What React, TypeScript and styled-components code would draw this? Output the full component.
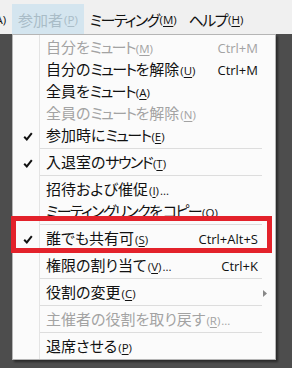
import styled, { createGlobalStyle } from 'styled-components';

const GlobalStyle = createGlobalStyle`
  html, body {
    margin: 0;
    padding: 0;
    background: #4d4d4d;
    width: 292px;
    height: 368px;
    overflow: hidden;
  }
  * {
    box-sizing: border-box;
  }
`;

const jp = `'Noto Sans CJK JP', 'Noto Sans', sans-serif`;
const latin = `'Open Sans', 'Liberation Sans', sans-serif`;

const MenuBar = styled.div`
  height: 34px;
  background: #f0f0f0;
  display: flex;
  align-items: flex-end;
  overflow: hidden;
  padding-top: 4px;
`;

const BarItem = styled.div<{ $active?: boolean; $first?: boolean }>`
  height: 30px;
  display: flex;
  align-items: center;
  padding: 0 6px;
  margin-left: ${(p) => (p.$first ? '-15px' : '0')};
  font-family: ${jp};
  font-feature-settings: 'palt';
  font-size: 15px;
  color: ${(p) => (p.$active ? '#a9bcc7' : '#111')};
  background: ${(p) => (p.$active ? '#d4e5ef' : 'transparent')};
  white-space: nowrap;
`;

const Kana = styled.span`
  letter-spacing: -1.6px;
`;

const Key = styled.span`
  font-family: ${latin};
  font-size: 11.5px;
  margin-left: 1px;

  u {
    text-decoration: underline;
    text-underline-offset: 2px;
  }
`;

const Stage = styled.div`
  padding: 0 16px 0 12px;
`;

const Menu = styled.div`
  position: relative;
  width: 264px;
  background: #fbfbfb linear-gradient(to right, transparent 26px, #e4e4e4 26px, #e4e4e4 27px, transparent 27px);
  border: 1px solid #b5b5b5;
  box-shadow: 2px 2px 2px rgba(0, 0, 0, 0.45);
  padding: 1px 0 2px;
`;

const Item = styled.div<{ $disabled?: boolean }>`
  position: relative;
  height: 22px;
  display: grid;
  grid-template-columns: 27px 1fr auto 17px;
  align-items: center;
  color: ${(p) => (p.$disabled ? '#a3a3a3' : '#111')};
`;

const CheckCell = styled.div`
  display: flex;
  align-items: center;
  justify-content: center;
  padding-left: 2px;

  svg {
    width: 10px;
    height: 9px;
  }
`;

const Label = styled.div`
  padding-left: 6px;
  font-family: ${jp};
  font-feature-settings: 'palt';
  font-size: 15px;
  white-space: nowrap;
  line-height: 22px;
`;

const Shortcut = styled.div`
  font-family: ${latin};
  font-size: 13px;
  text-align: right;
`;

const ArrowCell = styled.div`
  display: flex;
  align-items: center;
  justify-content: center;
  padding-right: 4px;

  svg {
    width: 4px;
    height: 7px;
  }
`;

const Separator = styled.div`
  height: 5px;
  display: flex;
  align-items: center;
  padding: 0 13px 0 27px;

  &::after {
    content: '';
    flex: 1;
    height: 1px;
    background: #dddddd;
  }
`;

const Highlight = styled.div`
  position: absolute;
  left: -2px;
  right: 3px;
  top: -11px;
  bottom: -4px;
  border: 5px solid #e3222b;
  pointer-events: none;
`;

type Entry =
  | 'sep'
  | {
      text: string;
      key: string;
      dots?: boolean;
      shortcut?: string;
      checked?: boolean;
      disabled?: boolean;
      submenu?: boolean;
      marked?: boolean;
    };

const entries: Entry[] = [
  { text: '自分をミュート', key: 'M', shortcut: 'Ctrl+M', disabled: true },
  { text: '自分のミュートを解除', key: 'U', shortcut: 'Ctrl+M' },
  { text: '全員をミュート', key: 'A' },
  { text: '全員のミュートを解除', key: 'N', disabled: true },
  { text: '参加時にミュート', key: 'E', checked: true },
  'sep',
  { text: '入退室のサウンド', key: 'T', checked: true },
  'sep',
  { text: '招待および催促', key: 'I', dots: true },
  { text: 'ミーティングリンクをコピー', key: 'O' },
  'sep',
  { text: '誰でも共有可', key: 'S', shortcut: 'Ctrl+Alt+S', checked: true, marked: true },
  'sep',
  { text: '権限の割り当て', key: 'V', dots: true, shortcut: 'Ctrl+K' },
  'sep',
  { text: '役割の変更', key: 'C', submenu: true },
  'sep',
  { text: '主催者の役割を取り戻す', key: 'R', dots: true, disabled: true },
  'sep',
  { text: '退席させる', key: 'P' },
];

// katakana in the UI font runs narrower than in Noto, so tighten those runs
function JpText({ text }: { text: string }) {
  const runs = text.match(/[\u30A0-\u30FF]+|[^\u30A0-\u30FF]+/g) ?? [];
  return (
    <>
      {runs.map((r, i) => (/[\u30A0-\u30FF]/.test(r) ? <Kana key={i}>{r}</Kana> : <span key={i}>{r}</span>))}
    </>
  );
}

function Check() {
  return (
    <svg viewBox="0 0 10 9">
      <path d="M1.2 4.8 L3.8 7.4 L8.8 1.2" fill="none" stroke="#111" strokeWidth="2" strokeLinejoin="miter" />
    </svg>
  );
}

export default function App() {
  return (
    <>
      <GlobalStyle />
      <MenuBar>
        <BarItem $first>
          <Key>(A)</Key>
        </BarItem>
        <BarItem $active>
          参加者<Key>(<u>P</u>)</Key>
        </BarItem>
        <BarItem>
          <JpText text="ミーティング" />
          <Key>(<u>M</u>)</Key>
        </BarItem>
        <BarItem>
          <JpText text="ヘルプ" />
          <Key>(<u>H</u>)</Key>
        </BarItem>
      </MenuBar>
      <Stage>
        <Menu>
          {entries.map((e, i) =>
            e === 'sep' ? (
              <Separator key={i} />
            ) : (
              <Item key={i} $disabled={e.disabled}>
                <CheckCell>{e.checked && <Check />}</CheckCell>
                <Label>
                  <JpText text={e.text} />
                  <Key>
                    (<u>{e.key}</u>)
                  </Key>
                  {e.dots && <Key>...</Key>}
                </Label>
                <Shortcut>{e.shortcut}</Shortcut>
                <ArrowCell>
                  {e.submenu && (
                    <svg viewBox="0 0 4 7">
                      <path d="M0 0 L4 3.5 L0 7 Z" fill="#888" />
                    </svg>
                  )}
                </ArrowCell>
                {e.marked && <Highlight />}
              </Item>
            )
          )}
        </Menu>
      </Stage>
    </>
  );
}
